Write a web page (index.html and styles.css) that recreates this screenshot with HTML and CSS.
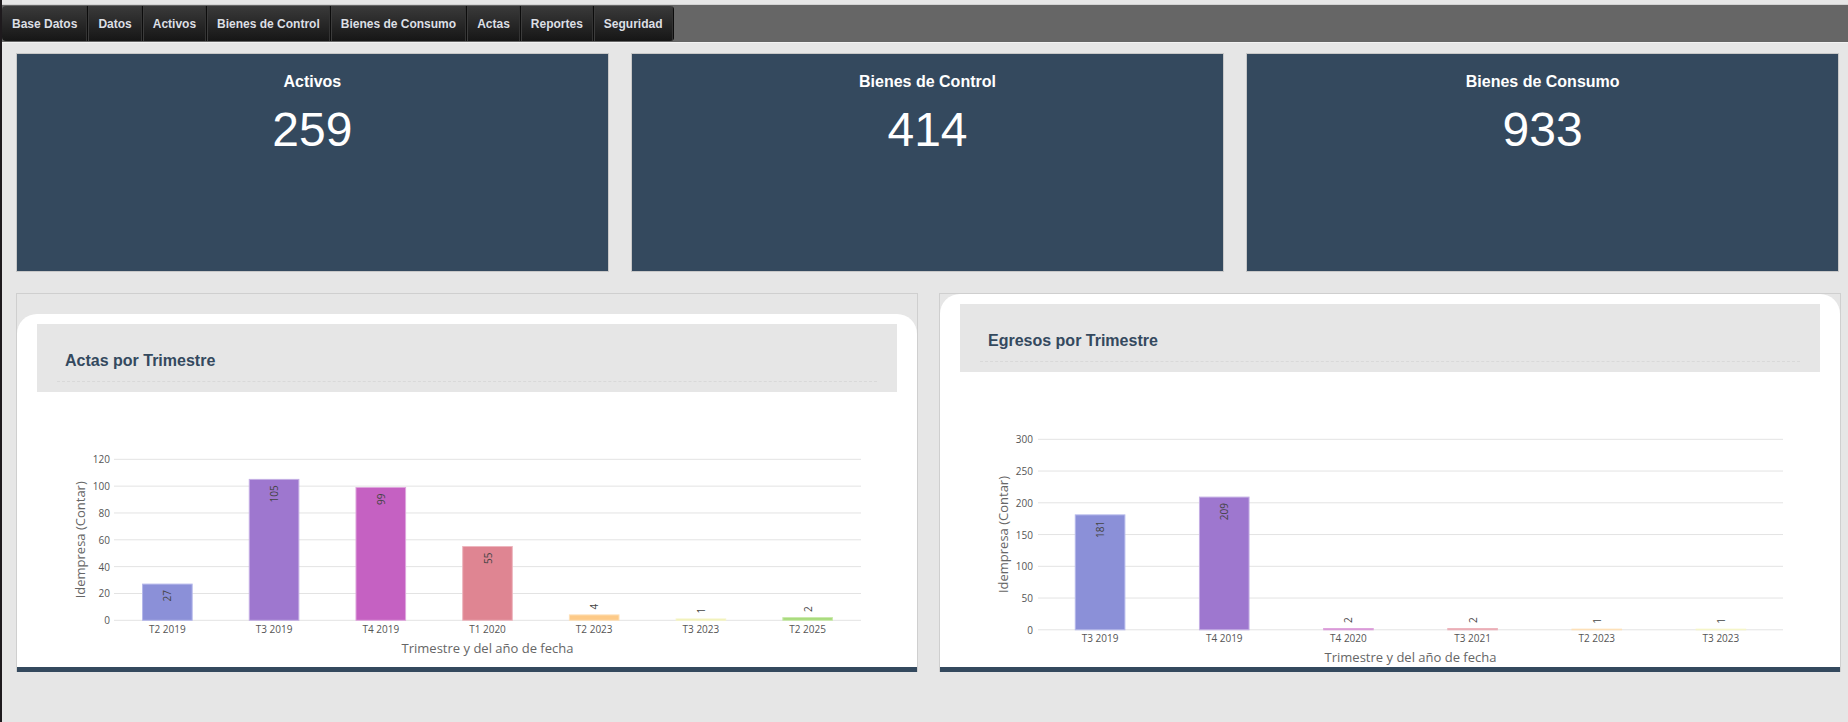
FILE: index.html
```html
<!DOCTYPE html>
<html lang="es">
<head>
<meta charset="utf-8">
<title>Dashboard</title>
<link rel="stylesheet" href="styles.css">
</head>
<body>
<header class="topbar">
  <nav class="navbar">
    <a class="nav-item">Base Datos</a>
    <a class="nav-item">Datos</a>
    <a class="nav-item">Activos</a>
    <a class="nav-item">Bienes de Control</a>
    <a class="nav-item">Bienes de Consumo</a>
    <a class="nav-item">Actas</a>
    <a class="nav-item">Reportes</a>
    <a class="nav-item">Seguridad</a>
  </nav>
</header>
<main class="content">
  <section class="stats">
    <div class="stat"><div class="stat-title">Activos</div><div class="stat-value">259</div></div>
    <div class="stat"><div class="stat-title">Bienes de Control</div><div class="stat-value">414</div></div>
    <div class="stat"><div class="stat-title">Bienes de Consumo</div><div class="stat-value">933</div></div>
  </section>
  <section class="charts">
    <div class="panel">
      <div class="chart-card chart-card--offset">
        <div class="chart-header"><h3 class="chart-title">Actas por Trimestre</h3></div>
        <svg class="chart" width="900" height="275" viewBox="0 0 900 275">
          <g class="grid">
            <line x1="97" x2="844" y1="228.3" y2="228.3"/>
            <line x1="97" x2="844" y1="201.47" y2="201.47"/>
            <line x1="97" x2="844" y1="174.63" y2="174.63"/>
            <line x1="97" x2="844" y1="147.8" y2="147.8"/>
            <line x1="97" x2="844" y1="120.97" y2="120.97"/>
            <line x1="97" x2="844" y1="94.13" y2="94.13"/>
            <line x1="97" x2="844" y1="67.3" y2="67.3"/>
          </g>
          <g class="tick tick-y">
            <text x="93" y="228.3">0</text>
            <text x="93" y="201.47">20</text>
            <text x="93" y="174.63">40</text>
            <text x="93" y="147.8">60</text>
            <text x="93" y="120.97">80</text>
            <text x="93" y="94.13">100</text>
            <text x="93" y="67.3">120</text>
          </g>
          <rect class="c1" x="125.56" y="192.1" width="49.6" height="36.2"/>
          <rect class="c2" x="232.27" y="87.4" width="49.6" height="140.9"/>
          <rect class="c3" x="338.99" y="95.5" width="49.6" height="132.8"/>
          <rect class="c4" x="445.7" y="154.5" width="49.6" height="73.8"/>
          <rect class="c5" x="552.41" y="222.9" width="49.6" height="5.4"/>
          <rect class="c6" x="659.13" y="226.96" width="49.6" height="1.34"/>
          <rect class="c7" x="765.84" y="225.6" width="49.6" height="2.7"/>
          <g class="bar-label">
            <text class="in" transform="translate(150.36,198.1) rotate(-90)">27</text>
            <text class="in" transform="translate(257.07,93.4) rotate(-90)">105</text>
            <text class="in" transform="translate(363.79,101.5) rotate(-90)">99</text>
            <text class="in" transform="translate(470.5,160.5) rotate(-90)">55</text>
            <text class="out" transform="translate(577.21,217.4) rotate(-90)">4</text>
            <text class="out" transform="translate(683.93,221.5) rotate(-90)">1</text>
            <text class="out" transform="translate(790.64,220.1) rotate(-90)">2</text>
          </g>
          <g class="tick tick-x">
            <text x="150.36" y="237.4">T2 2019</text>
            <text x="257.07" y="237.4">T3 2019</text>
            <text x="363.79" y="237.4">T4 2019</text>
            <text x="470.5" y="237.4">T1 2020</text>
            <text x="577.21" y="237.4">T2 2023</text>
            <text x="683.93" y="237.4">T3 2023</text>
            <text x="790.64" y="237.4">T2 2025</text>
          </g>
          <text class="axis-title" x="470.5" y="256">Trimestre y del año de fecha</text>
          <text class="axis-title" transform="translate(63,147.8) rotate(-90)">Idempresa (Contar)</text>
        </svg>
      </div>
    </div>
    <div class="panel">
      <div class="chart-card">
        <div class="chart-header"><h3 class="chart-title">Egresos por Trimestre</h3></div>
        <svg class="chart" width="900" height="295" viewBox="0 0 900 295">
          <g class="grid">
            <line x1="98" x2="843" y1="257.8" y2="257.8"/>
            <line x1="98" x2="843" y1="226.05" y2="226.05"/>
            <line x1="98" x2="843" y1="194.3" y2="194.3"/>
            <line x1="98" x2="843" y1="162.55" y2="162.55"/>
            <line x1="98" x2="843" y1="130.8" y2="130.8"/>
            <line x1="98" x2="843" y1="99.05" y2="99.05"/>
            <line x1="98" x2="843" y1="67.3" y2="67.3"/>
          </g>
          <g class="tick tick-y">
            <text x="93" y="257.8">0</text>
            <text x="93" y="226.05">50</text>
            <text x="93" y="194.3">100</text>
            <text x="93" y="162.55">150</text>
            <text x="93" y="130.8">200</text>
            <text x="93" y="99.05">250</text>
            <text x="93" y="67.3">300</text>
          </g>
          <rect class="c1" x="135.28" y="142.9" width="49.6" height="114.9"/>
          <rect class="c2" x="259.45" y="125.1" width="49.6" height="132.7"/>
          <rect class="c3" x="383.62" y="256.53" width="49.6" height="1.27"/>
          <rect class="c4" x="507.78" y="256.53" width="49.6" height="1.27"/>
          <rect class="c5" x="631.95" y="257.17" width="49.6" height="0.64"/>
          <rect class="c6" x="756.12" y="257.17" width="49.6" height="0.64"/>
          <g class="bar-label">
            <text class="in" transform="translate(160.08,148.9) rotate(-90)">181</text>
            <text class="in" transform="translate(284.25,131.1) rotate(-90)">209</text>
            <text class="out" transform="translate(408.42,251) rotate(-90)">2</text>
            <text class="out" transform="translate(532.58,251) rotate(-90)">2</text>
            <text class="out" transform="translate(656.75,251.7) rotate(-90)">1</text>
            <text class="out" transform="translate(780.92,251.7) rotate(-90)">1</text>
          </g>
          <g class="tick tick-x">
            <text x="160.08" y="265.6">T3 2019</text>
            <text x="284.25" y="265.6">T4 2019</text>
            <text x="408.42" y="265.6">T4 2020</text>
            <text x="532.58" y="265.6">T3 2021</text>
            <text x="656.75" y="265.6">T2 2023</text>
            <text x="780.92" y="265.6">T3 2023</text>
          </g>
          <text class="axis-title" x="470.5" y="284.5">Trimestre y del año de fecha</text>
          <text class="axis-title" transform="translate(63,162.55) rotate(-90)">Idempresa (Contar)</text>
        </svg>
      </div>
    </div>
  </section>
</main>
</body>
</html>
```
FILE: styles.css
```css
html, body {
  margin: 0;
  padding: 0;
}

body {
  box-sizing: border-box;
  height: 722px;
  overflow: hidden;
  background: #e6e6e6;
  border-left: 2px solid #1e1a1d;
  font-family: "Liberation Sans", Arial, sans-serif;
}

.topbar {
  margin-top: 4px;
  height: 36px;
  padding-top: 1px;
  background: #666666;
  border-top: 1px solid #d2d2d2;
  border-bottom: 1px solid #f2f2f2;
}

.navbar {
  display: inline-flex;
  height: 35px;
  background: linear-gradient(#3a3a3a, #161616);
  border-radius: 4px;
  overflow: hidden;
}

.nav-item {
  display: flex;
  align-items: center;
  padding: 0 10px;
  color: #dcdfe4;
  font-size: 12px;
  font-weight: bold;
  text-decoration: none;
  border-right: 1px solid #0c0c0c;
  box-shadow: inset -1px 0 0 #333, 1px 0 0 #3c3c3c;
}

.content {
  padding: 10px 9px 0 14px;
}

.stats {
  display: grid;
  grid-template-columns: repeat(3, 1fr);
  gap: 22.5px;
}

.stat {
  box-sizing: border-box;
  height: 219px;
  padding-top: 18px;
  background: #34495e;
  border: 1px solid #c8c8c8;
  color: #ffffff;
  text-align: center;
}

.stat-title {
  font-size: 16px;
  font-weight: bold;
  line-height: 20px;
}

.stat-value {
  margin-top: 10px;
  font-size: 48px;
  line-height: 56px;
}

.charts {
  display: grid;
  grid-template-columns: 1fr 1fr;
  gap: 21px;
  margin-top: 21px;
}

.panel {
  display: flex;
  flex-direction: column;
  border: 1px solid #cfcfcf;
  border-bottom: 0;
  background: #e6e6e6;
}

.chart-card {
  flex: 1;
  display: flex;
  flex-direction: column;
  background: #ffffff;
  border-radius: 20px 20px 0 0;
  border-bottom: 5px solid #34495e;
}

.chart-card--offset {
  margin-top: 20px;
}

.chart-header {
  margin: 10px 20px 0;
  padding: 20px 20px 10px;
  background: #e6e6e6;
}

.chart-title {
  margin: 0;
  padding: 7px 8px 10px;
  font-size: 16px;
  font-weight: bold;
  line-height: 20px;
  color: #34495e;
  border-bottom: 1px dashed #d9d9d9;
}

.chart {
  display: block;
}

.grid line {
  stroke: #e3e3e3;
  stroke-width: 1;
}

.tick text {
  font-family: "Open Sans", "DejaVu Sans", sans-serif;
  font-size: 10px;
  fill: #555555;
  dominant-baseline: central;
}

.tick-y text {
  text-anchor: end;
}

.tick-x text {
  text-anchor: middle;
}

.axis-title {
  font-family: "Open Sans", "DejaVu Sans", sans-serif;
  font-size: 13px;
  fill: #666666;
  text-anchor: middle;
  dominant-baseline: central;
}

.bar-label text {
  font-family: "Open Sans", "DejaVu Sans", sans-serif;
  font-size: 10px;
  fill: #444444;
  dominant-baseline: central;
}

.bar-label .in {
  text-anchor: end;
}

.bar-label .out {
  text-anchor: start;
}

.c1 { fill: #8b90d8; stroke: #b4b7ea; }
.c2 { fill: #9e77cf; stroke: #c4aee4; }
.c3 { fill: #c561c2; stroke: #dfa6dd; }
.c4 { fill: #df8592; stroke: #edb6be; }
.c5 { fill: #fdca88; stroke: #fde0b8; }
.c6 { fill: #eeeea6; stroke: #f5f5c8; }
.c7 { fill: #a6da79; stroke: #c9e9ab; }
```
